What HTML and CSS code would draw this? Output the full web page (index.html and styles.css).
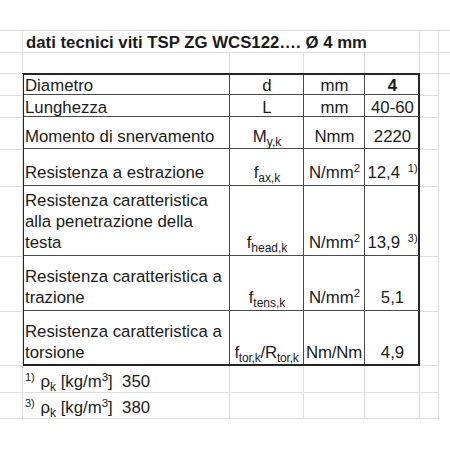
FILE: index.html
```html
<!DOCTYPE html>
<html lang="it">
<head>
<meta charset="utf-8">
<title>dati tecnici viti TSP ZG WCS122</title>
<link rel="stylesheet" href="styles.css">
</head>
<body>
<div class="sheet">
  <!-- row 1 -->
  <div class="g"></div>
  <div class="g title"><div>dati tecnici viti TSP ZG WCS122…. Ø 4 mm</div></div>
  <div class="g"></div>
  <div class="g edge"></div>
  <!-- row 2 -->
  <div class="g"></div><div class="g"></div><div class="g"></div><div class="g"></div><div class="g"></div><div class="g"></div><div class="g edge"></div>

  <!-- data table, spans columns B..E, rows 3..9 -->
  <div class="specs">
    <div class="k lbl s"><div>Diametro</div></div>
    <div class="k ctr s"><div>d</div></div>
    <div class="k ctr s"><div>mm</div></div>
    <div class="k ctr s end"><div><b>4</b></div></div>

    <div class="k lbl s"><div>Lunghezza</div></div>
    <div class="k ctr s"><div>L</div></div>
    <div class="k ctr s"><div>mm</div></div>
    <div class="k ctr s end"><div>40-60</div></div>

    <div class="k lbl p1"><div>Momento di snervamento</div></div>
    <div class="k ctr p1"><div>M<sub>y,k</sub></div></div>
    <div class="k ctr p1"><div>Nmm</div></div>
    <div class="k ctr p1 end"><div>2220</div></div>

    <div class="k lbl"><div>Resistenza a estrazione</div></div>
    <div class="k ctr"><div>f<sub>ax,k</sub></div></div>
    <div class="k ctr"><div>N/mm<sup>2</sup></div></div>
    <div class="k ctr end"><div>12,4 <sup class="note">1)</sup></div></div>

    <div class="k lbl"><div>Resistenza caratteristica alla penetrazione della testa</div></div>
    <div class="k ctr"><div>f<sub>head,k</sub></div></div>
    <div class="k ctr"><div>N/mm<sup>2</sup></div></div>
    <div class="k ctr end"><div>13,9 <sup class="note">3)</sup></div></div>

    <div class="k lbl"><div>Resistenza caratteristica a trazione</div></div>
    <div class="k ctr"><div>f<sub>tens,k</sub></div></div>
    <div class="k ctr"><div>N/mm<sup>2</sup></div></div>
    <div class="k ctr end"><div>5,1</div></div>

    <div class="k lbl p1 bottom"><div>Resistenza caratteristica a torsione</div></div>
    <div class="k ctr p1 bottom tight"><div>f<sub>tor,k</sub>/R<sub>tor,k</sub></div></div>
    <div class="k ctr p1 bottom tight"><div>Nm/Nm</div></div>
    <div class="k ctr p1 bottom end"><div>4,9</div></div>
  </div>

  <!-- rows 3..9: column A, F, G -->
  <div class="g a r3"></div><div class="g f r3"></div><div class="g edge gg r3"></div>
  <div class="g a r4"></div><div class="g f r4"></div><div class="g edge gg r4"></div>
  <div class="g a r5"></div><div class="g f r5"></div><div class="g edge gg r5"></div>
  <div class="g a r6"></div><div class="g f r6"></div><div class="g edge gg r6"></div>
  <div class="g a r7"></div><div class="g f r7"></div><div class="g edge gg r7"></div>
  <div class="g a r8"></div><div class="g f r8"></div><div class="g edge gg r8"></div>
  <div class="g a r9"></div><div class="g f r9"></div><div class="g edge gg r9"></div>

  <!-- row 10 -->
  <div class="g"></div>
  <div class="g foot"><div><sup class="fn">1)</sup> ρ<sub>k</sub> [kg/m<sup>3</sup>]&nbsp; 350</div></div>
  <div class="g"></div><div class="g"></div><div class="g"></div><div class="g"></div><div class="g edge gg"></div>
  <!-- row 11 -->
  <div class="g"></div>
  <div class="g foot"><div><sup class="fn">3)</sup> ρ<sub>k</sub> [kg/m<sup>3</sup>]&nbsp; 380</div></div>
  <div class="g"></div><div class="g"></div><div class="g"></div><div class="g"></div><div class="g edge gg"></div>
</div>
</body>
</html>
```

FILE: styles.css
```css
html, body {
  margin: 0;
  padding: 0;
  background: #ffffff;
}

body {
  font-family: "Liberation Sans", Arial, sans-serif;
  font-size: 16.8px;
  color: #1a1a1a;
}

*, *::before, *::after {
  box-sizing: border-box;
}

.sheet {
  margin-top: 30px;
  width: 450px;
  display: grid;
  grid-template-columns: 23px 207px 74px 61px 55px 19px 11px;
  grid-template-rows: 22px 21px 22px 22px 32px 37px 70px 55px 54px 27px 26px;
  border-top: 1px solid #dedede;
}

/* light spreadsheet gridline cells */
.g {
  border-right: 1px solid #dedede;
  border-bottom: 1px solid #dedede;
  display: flex;
  flex-direction: column;
  justify-content: flex-end;
  white-space: nowrap;
  min-width: 0;
}

.g.edge {
  border-right: none;
}

.g.gg {
  border-bottom: none;
}

.a { grid-column: 1; }
.f { grid-column: 6; }
.gg { grid-column: 7; }
.r3 { grid-row: 3; }
.r4 { grid-row: 4; }
.r5 { grid-row: 5; }
.r6 { grid-row: 6; }
.r7 { grid-row: 7; }
.r8 { grid-row: 8; }
.r9 { grid-row: 9; }

.title {
  grid-column: 2 / 6;
  font-weight: bold;
  line-height: 19px;
  padding-left: 3px;
  overflow: visible;
}

.foot {
  line-height: 21px;
  padding-left: 2px;
  padding-bottom: 0;
}

/* data table */
.specs {
  grid-column: 2 / 6;
  grid-row: 3 / 10;
  margin-left: -1px;
  margin-top: -1px;
  display: grid;
  grid-template-columns: 206px 74px 61px 54px;
  grid-template-rows: 20px 22px 32px 37px 70px 55px 53px;
  border: 2px solid #262626;
  background: #ffffff;
}

.k {
  border-right: 1px solid #4a4a4a;
  border-bottom: 1px solid #4a4a4a;
  display: flex;
  flex-direction: column;
  justify-content: flex-end;
  line-height: 21px;
  padding: 0 0 2px 1px;
  white-space: nowrap;
  min-width: 0;
}

.k.end {
  border-right: none;
}

.k.bottom {
  border-bottom: none;
}

.k.s {
  line-height: 17px;
  padding-bottom: 0;
}

.k.p1 {
  padding-bottom: 1px;
}

.k.lbl {
  white-space: normal;
  padding-left: 1px;
  padding-right: 0;
}

.ctr {
  text-align: center;
}

.k.tight {
  padding-left: 0;
  padding-right: 0;
  letter-spacing: -0.2px;
}

sub {
  font-size: 12px;
  vertical-align: -4px;
  line-height: 0;
}

sup {
  font-size: 11.5px;
  vertical-align: 6px;
  line-height: 0;
}

sup.note {
  font-size: 11px;
  margin-left: 3px;
}

sup.fn {
  font-size: 11px;
  margin-right: 1px;
}
```
